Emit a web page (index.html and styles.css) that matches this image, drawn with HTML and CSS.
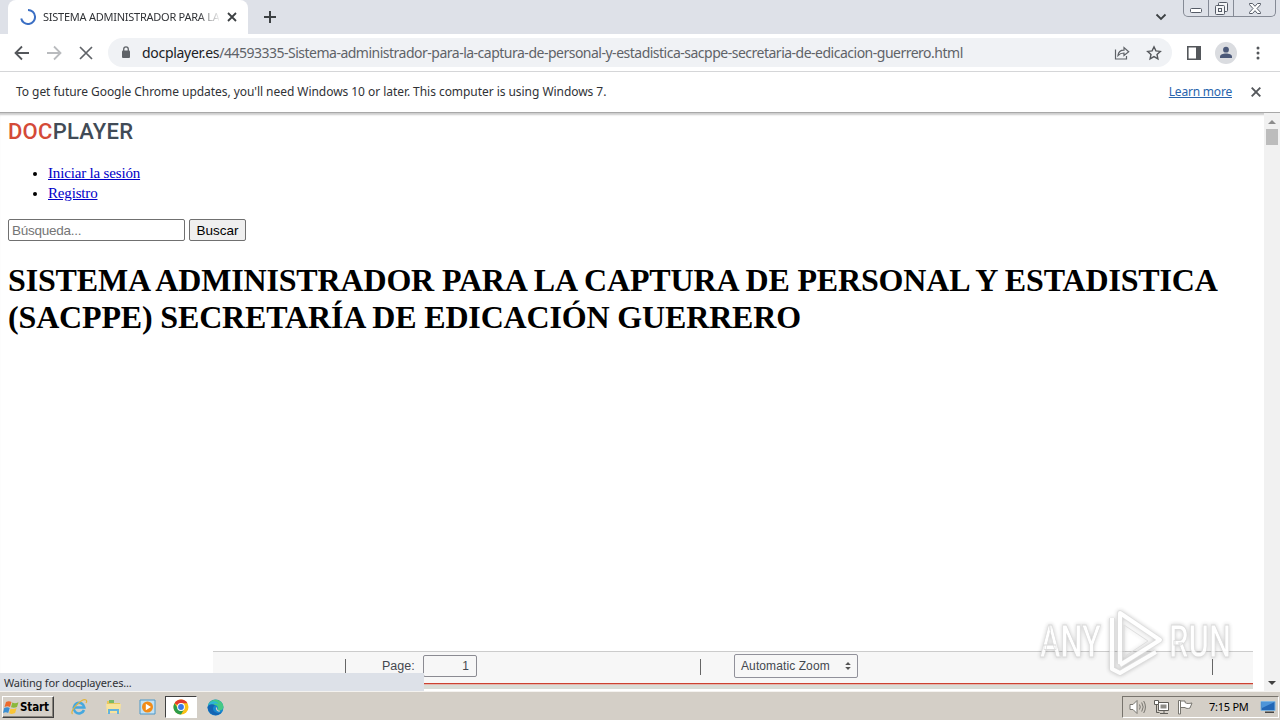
FILE: index.html
```html
<!DOCTYPE html>
<html lang="es">
<head>
    <meta charset="UTF-8">
    <meta name="viewport" content="width=device-width, initial-scale=1.0">
    <title>SISTEMA ADMINISTRADOR PARA LA CAPTURA DE PERSONAL Y ESTADISTICA</title>
    <link rel="stylesheet" href="styles.css">
</head>
<body>
    <header class="tab-strip">
        <div class="tab">
            <svg class="spinner" width="16" height="16" viewBox="0 0 16 16"><path d="M8 1a7 7 0 1 1-6.8 8.5" fill="none" stroke="#3b6fc4" stroke-width="2"/></svg>
            <span class="tab-title">SISTEMA ADMINISTRADOR PARA LA</span>
            <svg width="10" height="10" viewBox="0 0 10 10"><path d="M1 1l8 8M9 1L1 9" stroke="#3c4043" stroke-width="1.8"/></svg>
        </div>
        <svg class="new-tab" width="12" height="12" viewBox="0 0 12 12"><path d="M6 0v12M0 6h12" stroke="#3c4043" stroke-width="2"/></svg>
        <svg class="tab-search" width="12" height="8" viewBox="0 0 12 8"><path d="M1.500 1.500L6 6l4.500-4.500" fill="none" stroke="#3c4043" stroke-width="1.800"/></svg>
        <div class="window-buttons">
            <span><svg width="12" height="5" viewBox="0 0 12 5"><rect x=".5" y=".5" width="11" height="4" rx="1" fill="#fff" stroke="#555b66"/></svg></span>
            <span><svg width="13" height="13" viewBox="0 0 13 13" fill="#f4f5f7" stroke="#555b66"><rect x="3.500" y=".5" width="9" height="9" rx="1"/><rect x=".5" y="3.500" width="9" height="9" rx="1"/><rect x="3.500" y="6.500" width="3" height="3"/></svg></span>
            <span class="win-close"><svg width="12" height="11" viewBox="0 0 12 11"><path d="M.5.5h3L6 3.300 8.500.5h3v1.200L8 5.500l3.500 3.800v1.200h-3L6 7.700l-2.500 2.800h-3V9.300L4 5.500.5 1.700z" fill="#fff" stroke="#555b66"/></svg></span>
        </div>
    </header>

    <nav class="toolbar">
        <svg width="16" height="16" viewBox="0 0 16 16" fill="none" stroke="#54575b" stroke-width="1.800"><path d="M15 8H2M8 1.500L1.500 8 8 14.500"/></svg>
        <svg width="16" height="16" viewBox="0 0 16 16" fill="none" stroke="#b9bbbe" stroke-width="1.800"><path d="M1 8h13M8 1.500L14.500 8 8 14.500"/></svg>
        <svg width="16" height="16" viewBox="0 0 16 16" stroke="#5f6368" stroke-width="1.700"><path d="M2 2l12 12M14 2L2 14"/></svg>
        <div class="address">
            <svg width="10" height="13" viewBox="0 0 10 13"><rect x="1" y="4.500" width="8" height="7.500" rx="1" fill="#5f6368"/><path d="M2.700 5V3.200a2.300 2.300 0 0 1 4.600 0V5" fill="none" stroke="#5f6368" stroke-width="1.300"/></svg>
            <span class="url"><b>docplayer.es</b>/44593335-Sistema-administrador-para-la-captura-de-personal-y-estadistica-sacppe-secretaria-de-edicacion-guerrero.html</span>
            <svg class="share" width="16" height="14" viewBox="0 0 16 14" fill="none" stroke="#5f6368" stroke-width="1.200"><path d="M1.500 3.500v9.500h11v-3M4 9.500c.4-3.600 2.500-5.300 6-5.300V1.500L14.700 5.700 10 9.500V7c-2.600 0-4.500.8-6 2.500z"/></svg>
            <svg class="star" width="16" height="16" viewBox="0 0 16 16"><path d="M8 1.800l1.900 4.100 4.400.5-3.300 3 .9 4.400L8 11.600l-3.900 2.200.9-4.400-3.300-3 4.400-.5z" fill="none" stroke="#54575b" stroke-width="1.400"/></svg>
        </div>
        <svg class="panel" width="14" height="14" viewBox="0 0 14 14"><path d="M.8.8h12.400v12.400H.8z" fill="none" stroke="#54575b" stroke-width="1.600"/><path d="M9 1h4v12H9z" fill="#54575b"/></svg>
        <svg class="profile" width="22" height="22" viewBox="0 0 22 22"><circle cx="11" cy="11" r="11" fill="#dadce0"/><circle cx="11" cy="7.700" r="2.900" fill="#4a5878"/><path d="M5 16v-1.300c0-2 3-3.200 6-3.200s6 1.200 6 3.200V16z" fill="#4a5878"/></svg>
        <svg class="more" width="4" height="14" viewBox="0 0 4 14" fill="#54575b"><circle cx="2" cy="2" r="1.500"/><circle cx="2" cy="7" r="1.500"/><circle cx="2" cy="12" r="1.500"/></svg>
    </nav>

    <div class="infobar">
        <span class="info-text">To get future Google Chrome updates, you'll need Windows 10 or later. This computer is using Windows 7.</span>
        <a class="learn" href="#">Learn more</a>
        <svg width="10" height="10" viewBox="0 0 10 10"><path d="M.7.7l8.600 8.600M9.300.7L.7 9.300" stroke="#54575b" stroke-width="1.900"/></svg>
    </div>

    <div class="viewport">
        <main class="page">
            <div class="logo"><span>DOC</span>PLAYER</div>
            <ul>
                <li><a href="#">Iniciar la sesión</a></li>
                <li><a href="#">Registro</a></li>
            </ul>
            <form>
                <input type="text" placeholder="Búsqueda...">
                <button type="button">Buscar</button>
            </form>
            <h1>SISTEMA ADMINISTRADOR PARA LA CAPTURA DE PERSONAL Y ESTADISTICA<br>(SACPPE) SECRETARÍA DE EDICACIÓN GUERRERO</h1>
            <div class="viewer">
                <div class="viewer-bar">
                    <i class="sep"></i>
                    <span class="page-label">Page:</span>
                    <span class="page-number">1</span>
                    <i class="sep sep-mid"></i>
                    <span class="zoom">Automatic Zoom
                        <svg width="6" height="8" viewBox="0 0 6 8" fill="#555"><path d="M3 0l2.800 3H.2zM3 8l2.800-3H.2z"/></svg>
                    </span>
                    <i class="sep sep-end"></i>
                </div>
                <div class="viewer-body"></div>
            </div>
        </main>
        <div class="scrollbar">
            <svg width="8" height="4" viewBox="0 0 8 4"><path d="M0 4l4-4 4 4z" fill="#8c8c8c"/></svg>
            <div class="thumb"></div>
            <svg class="down" width="8" height="4" viewBox="0 0 8 4"><path d="M0 0l4 4 4-4z" fill="#404040"/></svg>
        </div>
        <div class="status">Waiting for docplayer.es...</div>
    </div>

    <footer class="taskbar">
        <div class="start">
            <svg width="17" height="15" viewBox="0 0 17 15"><path d="M3 2c2-1.300 4-1 5.500 0L7 7C5.500 6 3.500 6 1.500 7z" fill="#ed6b2d"/><path d="M9.300 2.500c2 1 4 .8 6.200-.3L14 7c-2 1-4 1-6 .3z" fill="#8bb83b"/><path d="M1.200 8c2-1 4-1 5.500 0l-1.500 5C3.700 12 2 12 0 13z" fill="#3b8fd3"/><path d="M7.600 8.400c2 1 4 .7 6-.3l-1.500 5c-2 1-4 1-6 .2z" fill="#fac536"/></svg>
            <span>Start</span>
        </div>
        <div class="apps">
            <span><svg width="18" height="18" viewBox="0 0 18 18" fill="none"><path d="M14 12A5.300 5.300 0 1 1 14.300 9.500H5" stroke="#45a8df" stroke-width="2.600"/><path d="M2.500 16C-1 13 12 0 16 2c1 .6.800 1.800 0 3" stroke="#e1b53d" stroke-width="1.200"/></svg></span>
            <span><svg width="17" height="16" viewBox="0 0 17 16"><path d="M2 2h5l1 2h7v10H2z" fill="#e9c75c"/><path d="M4 1h5v3H4z" fill="#79b966"/><path d="M1 5h15l-1 9H2z" fill="#f8e39b"/><path d="M3 15v-5h11v5h-2v-3H5v3z" fill="#65b3dd"/></svg></span>
            <span><svg width="17" height="16" viewBox="0 0 17 16"><path d="M1 1h15v14H1z" fill="#c3e1f3" stroke="#4d98c8"/><circle cx="8.500" cy="8" r="5.500" fill="#f28c18"/><path d="M6.800 4.800L12 8l-5.200 3.200z" fill="#fff"/></svg></span>
            <span class="active"><svg width="16" height="16" viewBox="0 0 16 16"><circle cx="8" cy="8" r="7.500" fill="#fbc116"/><path d="M8 8L1.500 4.250A7.500 7.500 0 0 1 14.500 4.250H8z" fill="#e33b2e"/><path d="M1.500 4.250A7.500 7.500 0 0 0 8 15.500l3.250-5.600L8 8H4z" fill="#2c9c4b"/><circle cx="8" cy="8" r="3.900" fill="#fff"/><circle cx="8" cy="8" r="2.900" fill="#3b78e7"/></svg></span>
            <span><svg width="17" height="17" viewBox="0 0 16 16"><circle cx="8" cy="8" r="7.500" fill="#1687cf"/><path d="M1 6C3-1 14-1.500 15.500 7c.2 3-2.500 4.500-5.500 3.500 1-2 0-4.500-3-5C4.500 5.200 2.300 5 1 6z" fill="#45c985"/><path d="M1 6c2-5 8-5 10-1-3-1.500-7-.5-8 3z" fill="#2bb5d8"/><path d="M.5 8C1 5 5 4 7.500 6 5 7 5 11 8 12.500c2 1 4 .8 6-.5-3 5-12 4.500-13.500-4z" fill="#1464b3"/><path d="M9 8c-.5 2 1 3.500 3 3.500" fill="none" stroke="#d4cfc7" stroke-width="1.200"/></svg></span>
        </div>
        <div class="tray">
            <svg width="17" height="16" viewBox="0 0 17 16" fill="#fff" stroke="#77756f"><path d="M1 5.500h3l4-4v13l-4-4H1z"/><path d="M10.500 5.500q1.500 2.500 0 5M12.700 3.500q3 4.500 0 9M14.700 2q3.500 6 0 12" fill="none"/></svg>
            <svg width="17" height="16" viewBox="0 0 17 16" fill="#fff" stroke="#5f5d58"><path d="M5.500 3.500h10v8h-10z"/><path d="M7.500 5.500h6v4h-6z" fill="#8d8b86" stroke="none"/><path d="M7 14.500h8M11 12v2M3.500 5v8.500h3" fill="none"/><path d="M1.500 1.500h4v4h-4z"/></svg>
            <svg width="17" height="16" viewBox="0 0 17 16" fill="#fff" stroke="#77756f"><path d="M2 2h6v1.500c2 1.500 4 1 7 .5l-2 5c-2 .8-4 .5-5-.5H3"/><path d="M1.500 1.500h2V15h-2z"/></svg>
            <span class="clock">7:15 PM</span>
            <svg width="16" height="14" viewBox="0 0 16 14"><path d="M1 1.500h14v9H1z" fill="#2367b6" stroke="#7eb4df"/><path d="M1.500 2h13L2 8z" fill="#4d95d9"/><path d="M5 11.500h9v1.500H5z" fill="#444"/></svg>
        </div>
    </footer>

    <div class="watermark">
        <svg width="220" height="72" viewBox="0 0 220 72">
            <g class="mark-text">
                <text x="3" y="50" textLength="61" lengthAdjust="spacingAndGlyphs">ANY</text>
                <text x="132" y="50" textLength="62" lengthAdjust="spacingAndGlyphs">RUN</text>
            </g>
            <g fill="none" stroke-linejoin="round">
                <path d="M83 57V6l40 27-40 25M75 11v51l8 4 36-21" stroke="#d8d8d8" stroke-width="5.500"/>
                <path d="M83 57V6l40 27-40 25M75 11v51l8 4 36-21" stroke="#fff" stroke-width="4"/>
                <path d="M87 18v32l24-16z" stroke="#d8d8d8"/>
            </g>
        </svg>
    </div>
</body>
</html>
```
FILE: styles.css
```css
* {
    box-sizing: border-box;
}

body {
    margin: 0;
    width: 1280px;
    height: 720px;
    overflow: hidden;
    display: flex;
    flex-direction: column;
    background: #fff;
    font-family: "Noto Sans", sans-serif;
    color: #303236;
}

svg {
    display: block;
    flex: none;
}

/* Browser chrome */
.tab-strip {
    height: 34px;
    display: flex;
    background: #dee1e8;
    padding-left: 8px;
    flex: none;
}

.tab {
    width: 240px;
    display: flex;
    align-items: center;
    padding: 0 11px 0 12px;
    background: #fff;
    border-radius: 8px 8px 0 0;
}

.tab-title {
    width: 176px;
    margin: -2px 8px 0 7px;
    overflow: hidden;
    white-space: nowrap;
    font-size: 11px;
    letter-spacing: -0.25px;
    -webkit-mask-image: linear-gradient(to right, #000 155px, transparent 178px);
}

.new-tab {
    margin: 11px 0 0 16px;
}

.tab-search {
    margin: 13px 16px 0 auto;
}

.window-buttons {
    display: flex;
    width: 93px;
    height: 17px;
    margin-right: 4px;
    border: 1px solid #858a95;
    border-top: 0;
    border-radius: 0 0 5px 5px;
}

.window-buttons span {
    width: 25px;
    display: flex;
    justify-content: center;
    align-items: center;
    border-right: 1px solid #858a95;
}

.window-buttons span:first-child {
    padding-top: 4px;
}

.window-buttons .win-close {
    width: 41px;
    border: 0;
}

.toolbar {
    height: 38px;
    display: flex;
    align-items: center;
    gap: 16px;
    padding: 0 20px 0 14px;
    border-bottom: 1px solid #d5d6d8;
    flex: none;
}

.address {
    width: 1064px;
    height: 29px;
    margin-left: -2px;
    display: flex;
    align-items: center;
    padding: 0 10px 0 13px;
    border-radius: 15px;
    background: #f0f2f5;
}

.url {
    margin-left: 11px;
    font-size: 14px;
    letter-spacing: -0.5px;
    white-space: nowrap;
    color: #5f6368;
}

.url b {
    font-weight: normal;
    color: #202124;
    letter-spacing: -0.3px;
}

.share {
    margin-left: auto;
}

.star {
    margin-left: 16px;
}

.panel {
    margin-left: -1px;
}

.profile {
    margin-left: -2px;
}

.more {
    margin-left: 3px;
}

.infobar {
    height: 41px;
    display: flex;
    align-items: center;
    padding: 0 19px 0 16px;
    border-bottom: 1px solid #a8a8a8;
    font-size: 12px;
    flex: none;
}

.info-text {
    margin-top: -2px;
    letter-spacing: -0.05px;
}

.learn {
    margin: -2px 19px 0 auto;
    color: #2864ad;
    letter-spacing: -0.2px;
}

/* Page */
.viewport {
    position: relative;
    display: flex;
    height: 579px;
    flex: none;
    border-bottom: 1px solid #f4f2ef;
    overflow: hidden;
    box-shadow: inset 0 3px 2px -1px #ccc;
}

.page {
    flex: 1;
    padding: 6px 11px 0 8px;
    font-family: "Liberation Serif", serif;
    color: #000;
}

.logo {
    font: 500 22px/25px Roboto, sans-serif;
    letter-spacing: 0.25px;
    color: #414b56;
}

.logo span {
    color: #d44a38;
}

.page ul {
    margin: 19px 0 16px;
    padding-left: 40px;
    font-size: 15px;
    line-height: 20px;
    letter-spacing: -0.17px;
}

.page a {
    color: #0000c8;
}

.page form {
    display: flex;
    gap: 4px;
    height: 22px;
}

.page input,
.page button {
    font: 13.5px "Liberation Sans", sans-serif;
    border: 1px solid #707070;
    border-radius: 2px;
}

.page input {
    width: 177px;
    padding: 1px 3px;
    letter-spacing: -0.25px;
}

.page button {
    width: 57px;
    padding: 0;
    background: #efefef;
    color: #000;
}

.page h1 {
    margin: 21px 0 0;
    font-size: 32px;
    line-height: 37px;
    letter-spacing: -0.16px;
    white-space: nowrap;
}

.viewer {
    width: 1040px;
    margin: 315px 0 0 205px;
    font-family: "Liberation Sans", sans-serif;
    font-size: 12px;
    color: #44484f;
}

.viewer-bar {
    height: 33px;
    display: flex;
    align-items: center;
    padding-bottom: 3px;
    border-top: 1px solid #ccc;
    border-bottom: 1px solid #cc4232;
    background: #f7f7f7;
}

.sep {
    width: 1px;
    height: 16px;
    margin: 2px 36px 0 132px;
    background: #666;
}

.page-label {
    width: 41px;
    margin-top: -1px;
    font-size: 12.5px;
}

.page-number {
    width: 54px;
    height: 22px;
    border: 1px solid #8b8b92;
    border-radius: 2px;
    padding-right: 7px;
    line-height: 20px;
    text-align: right;
}

.sep-mid {
    margin: 2px 33px 0 223px;
}

.zoom {
    display: flex;
    align-items: center;
    justify-content: space-between;
    width: 124px;
    height: 24px;
    padding: 0 6px;
    border: 1px solid #91919a;
    border-radius: 2px;
    letter-spacing: 0.1px;
}

.sep-end {
    margin: 2px 0 0 354px;
}

.viewer-body {
    height: 5px;
    border-top: 1px solid #e3b5ac;
    background: #d9ddd7;
}

.scrollbar {
    width: 16px;
    display: flex;
    flex-direction: column;
    align-items: center;
    padding: 7px 0 6px;
    background: #f1f1f1;
}

.thumb {
    width: 12px;
    height: 16px;
    margin-top: 5px;
    background: #bcbcbc;
}

.down {
    margin-top: auto;
}

.status {
    position: absolute;
    left: 0;
    bottom: 0;
    width: 424px;
    height: 18px;
    padding-left: 4px;
    background: #dde1e8;
    font-size: 11px;
    line-height: 19px;
    letter-spacing: -0.18px;
}

/* Windows taskbar */
.taskbar {
    height: 28px;
    display: flex;
    align-items: center;
    background: #d4cfc7;
    color: #000;
    flex: none;
}

.start {
    display: flex;
    align-items: center;
    width: 52px;
    height: 22px;
    margin: 2px 0 0 2px;
    padding-left: 0;
    border: 1px solid;
    border-color: #fff #404040 #404040 #fff;
    box-shadow: inset -1px -1px #88847c;
    font: bold 11.5px "DejaVu Sans Condensed", "DejaVu Sans", sans-serif;
    letter-spacing: -0.1px;
}

.apps {
    display: flex;
    gap: 2px;
    margin-left: 9px;
}

.apps span {
    display: flex;
    align-items: center;
    justify-content: center;
    width: 32px;
    height: 22px;
    margin-top: 2px;
}

.apps .active {
    background: #fff;
    border: 1px solid;
    border-color: #404040 #fff #fff #404040;
}

.tray {
    display: flex;
    align-items: center;
    gap: 7px;
    width: 157px;
    height: 22px;
    margin: 2px 1px 0 auto;
    padding-left: 6px;
    border: 1px solid;
    border-color: #77736c #fff #fff #77736c;
    font-size: 11px;
}

.clock {
    width: 41px;
    margin: -2px 3px 0 8px;
    letter-spacing: -0.25px;
    white-space: nowrap;
}

.watermark {
    position: absolute;
    left: 1037px;
    top: 607px;
    opacity: 0.85;
    filter: drop-shadow(0 0 2px rgba(0, 0, 0, 0.25));
}

.mark-text {
    font: 500 44px Roboto, sans-serif;
    fill: #fff;
    stroke: #d4d4d4;
    stroke-width: 0.8px;
}
```
